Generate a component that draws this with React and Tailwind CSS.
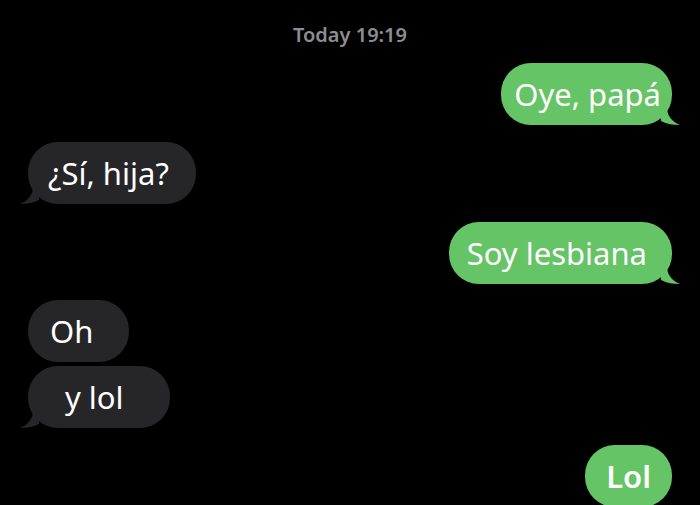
import React from 'react';

const GREEN = 'bg-[#65c466]';

const Tail = ({ side, color }) => {
  if (side === 'right') {
    return (
      <svg className="absolute -right-[9px] bottom-0" width="22" height="24" viewBox="0 0 22 24">
        <path d="M2 0 C6 0 8 2 8 6 C8 14 12 20 21 24 C14 24 8 23 2 20 Z" fill={color} />
      </svg>
    );
  }
  return (
    <svg className="absolute -left-[9px] bottom-0" width="22" height="24" viewBox="0 0 22 24">
      <path d="M20 0 C16 0 14 2 14 6 C14 14 10 20 1 24 C8 24 14 23 20 20 Z" fill={color} />
    </svg>
  );
};

const Bubble = ({ me, tail, children, className = '' }) => (
  <div
    className={`relative h-[62px] flex items-center rounded-[30px] text-white text-[31px] leading-none ${
      me ? GREEN : 'bg-[#262629]'
    } ${className}`}
  >
    <span className="relative z-10 whitespace-pre">{children}</span>
    {tail && <Tail side={me ? 'right' : 'left'} color={me ? '#65c466' : '#262629'} />}
  </div>
);

export default function App() {
  return (
    <div
      className="w-[700px] h-[505px] bg-black overflow-hidden flex flex-col px-[28px]"
      style={{ fontFamily: '"Noto Sans", "Open Sans", sans-serif' }}
    >
      <div className="pt-[23px] text-center text-[20px] font-semibold text-[#8d8d92] leading-[24px]">
        Today 19:19
      </div>

      <div className="self-end mt-[16px]">
        <Bubble me tail className="pl-[13px] pr-[11px]">Oye, papá</Bubble>
      </div>

      <div className="self-start mt-[17px]">
        <Bubble tail className="pl-[20px] pr-[27px]">¿Sí, hija?</Bubble>
      </div>

      <div className="self-end mt-[18px]">
        <Bubble me tail className="pl-[18px] pr-[25px]">Soy lesbiana</Bubble>
      </div>

      <div className="self-start mt-[16px]">
        <Bubble className="pl-[22px] pr-[36px]">Oh</Bubble>
      </div>

      <div className="self-start mt-[4px]">
        <Bubble tail className="pl-[37px] pr-[46px]">y lol</Bubble>
      </div>

      <div className="self-end mt-[17px]">
        <Bubble me className="pl-[21px] pr-[21px] font-semibold">Lol</Bubble>
      </div>
    </div>
  );
}
